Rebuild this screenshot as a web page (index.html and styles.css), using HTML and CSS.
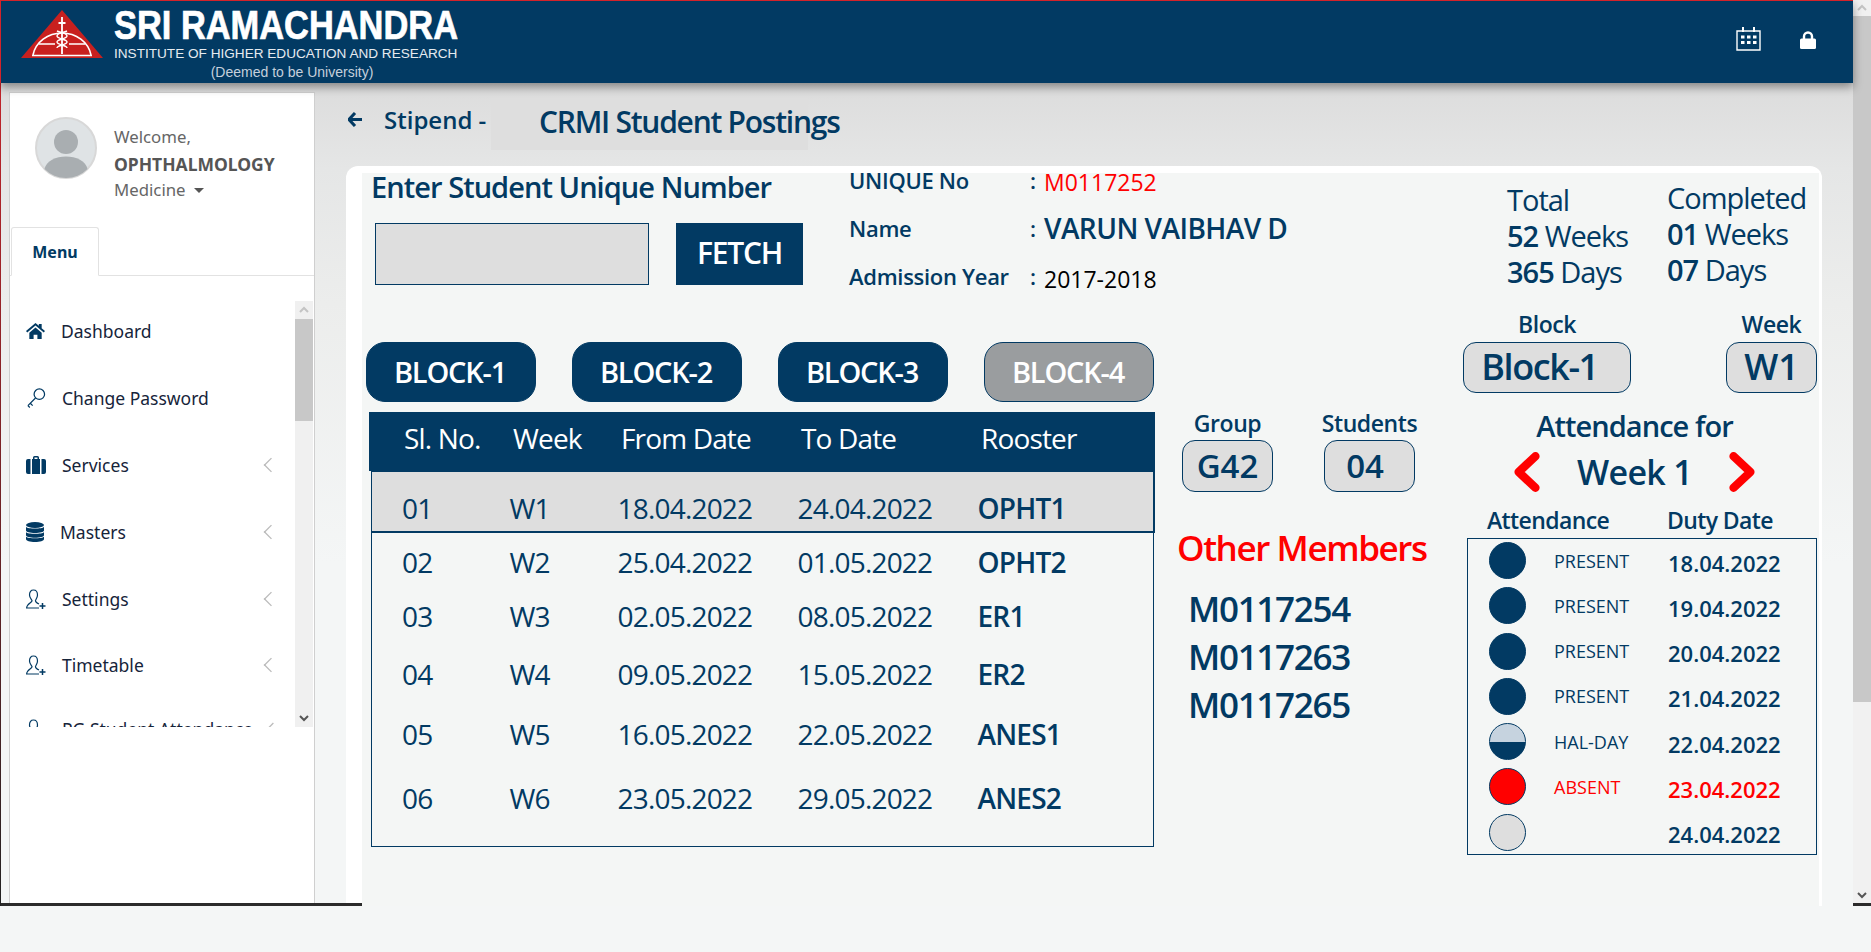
FILE: index.html
```html
<!DOCTYPE html>
<html lang="en">
<head>
  <meta charset="UTF-8" />
  <title>CRMI Student Postings</title>
  <link rel="stylesheet" href="styles.css">
</head>
<body>
  <div class="page">
    <header class="top-bar">
      <div class="brand">
        <svg class="brand-logo" viewBox="0 0 82 48">
          <path d="M41 0 82 48H0z" fill="#c8201f"/>
          <path d="M12 45A29.500 27 0 0 1 70 45" fill="none" stroke="#fff" stroke-width="1.600"/>
          <path d="M11 45.500H71M18 34H34M48 34H64" stroke="#fff" stroke-width="1.600"/>
          <path d="M41 7V44M37.500 13H44.500" stroke="#fff" stroke-width="1.800"/>
          <path d="M36 21C41 23 46 23 46 26S36 29 36 32 46 35 46 38M46 21C41 23 36 23 36 26S46 29 46 32 36 35 36 38" fill="none" stroke="#fff" stroke-width="1.400"/>
        </svg>
        <div class="brand-text">
          <div class="brand-name">SRI RAMACHANDRA</div>
          <div class="brand-sub">INSTITUTE OF HIGHER EDUCATION AND RESEARCH</div>
          <div class="brand-note">(Deemed to be University)</div>
        </div>
      </div>
      <div class="top-icons">
        <svg class="icon-calendar" viewBox="0 0 25 24">
          <path d="M1 4H24V23H1z" fill="none" stroke="#fff" stroke-width="1.400"/>
          <path d="M7 0V5M18 0V5" stroke="#fff" stroke-width="2"/>
          <path d="M5 8.500h3.500v3H5zM11 8.500h3.500v3H11zM17 8.500h3.500v3H17zM5 14h3.500v3H5zM11 14h3.500v3H11zM17 14h3.500v3H17z" fill="#fff"/>
        </svg>
        <svg class="icon-lock" viewBox="0 0 16 18">
          <path d="M4 8V5.500a4 4 0 0 1 8 0V8" fill="none" stroke="#fff" stroke-width="2.400"/>
          <rect y="7.500" width="16" height="10.500" rx="1.500" fill="#fff"/>
        </svg>
      </div>
    </header>

    <div class="shell">
      <aside class="side-col">
        <div class="sidebar">
          <div class="profile">
            <svg class="avatar" viewBox="0 0 62 62">
              <circle cx="31" cy="31" r="30" fill="#dfe3e5" stroke="#d8d8d8" stroke-width="2"/>
              <circle cx="31" cy="25" r="12" fill="#a9aeb1"/>
              <path d="M9.500 52C11 44 21 39.500 31 39.500S51 44 52.500 52A30 30 0 0 1 9.500 52z" fill="#a9aeb1"/>
            </svg>
            <div class="profile-text">
              <div>Welcome,</div>
              <div class="profile-name">OPHTHALMOLOGY</div>
              <div>Medicine <span class="caret"></span></div>
            </div>
          </div>

          <div class="tabs"><div class="tab">Menu</div></div>

          <div class="menu-wrap">
            <ul class="menu">
              <li>
                <svg class="mi mi-19" viewBox="0 0 20 17"><path d="M10 0 0 8.500 1.300 10 10 2.800 18.700 10 20 8.500 16.500 5.500V1h-3v2z M3.500 10.300V17H8v-4.500h4V17h4.500v-6.700L10 4.800z" fill="#023a63"/></svg>
                <span>Dashboard</span>
              </li>
              <li>
                <svg class="mi" viewBox="0 0 20 21"><g fill="none" stroke="#023a63" stroke-width="1.300"><circle cx="13.500" cy="6.500" r="5.500"/><path d="M9.500 10.500 1.500 18.500M4 16l2.500 2.500M1.500 18.500l2 2"/></g></svg>
                <span>Change Password</span>
              </li>
              <li>
                <svg class="mi" viewBox="0 0 20 18"><path d="M7 3V1.500A1.500 1.500 0 0 1 8.500 0h3A1.500 1.500 0 0 1 13 1.500V3h1v15H6V3zM8.500 3h3V1.500h-3zM4.500 3V18H2a2 2 0 0 1-2-2V5a2 2 0 0 1 2-2zM15.500 3H18a2 2 0 0 1 2 2V16a2 2 0 0 1-2 2h-2.500z" fill="#023a63"/></svg>
                <span>Services</span>
                <i class="chev"></i>
              </li>
              <li>
                <svg class="mi mi-18" viewBox="0 0 18 20"><g fill="#023a63"><ellipse cx="9" cy="3" rx="9" ry="3"/><path d="M0 5C2 7 16 7 18 5V8.500C18 10 14 11 9 11S0 10 0 8.500z"/><path d="M0 10.200C2 12.200 16 12.200 18 10.200V13.200C18 14.700 14 15.700 9 15.700S0 14.700 0 13.200z"/><path d="M0 14.800C2 16.800 16 16.800 18 14.800V17C18 18.800 14 20 9 20S0 18.800 0 17z"/></g></svg>
                <span>Masters</span>
                <i class="chev"></i>
              </li>
              <li>
                <svg class="mi" viewBox="0 0 20 20"><g fill="none" stroke="#023a63" stroke-width="1.200"><path d="M7.500 1C4.500 1 3.500 3.500 3.500 6S5 10 6 11.500C6.500 13.500 1 14 .6 19H13M7.500 1C10.500 1 11.500 3.500 11.500 6S10 10 9.500 11.500C9.300 13 11 14 13 15"/><path d="M16.500 14V20M13.500 17H19.500" stroke-width="1.500"/></g></svg>
                <span>Settings</span>
                <i class="chev"></i>
              </li>
              <li>
                <svg class="mi" viewBox="0 0 20 20"><g fill="none" stroke="#023a63" stroke-width="1.200"><path d="M7.500 1C4.500 1 3.500 3.500 3.500 6S5 10 6 11.500C6.500 13.500 1 14 .6 19H13M7.500 1C10.500 1 11.500 3.500 11.500 6S10 10 9.500 11.500C9.300 13 11 14 13 15"/><path d="M16.500 14V20M13.500 17H19.500" stroke-width="1.500"/></g></svg>
                <span>Timetable</span>
                <i class="chev"></i>
              </li>
              <li>
                <svg class="mi" viewBox="0 0 20 20"><g fill="none" stroke="#023a63" stroke-width="1.200"><path d="M7.500 1C4.500 1 3.500 3.500 3.500 6S5 10 6 11.500C6.500 13.500 1 14 .6 19H13M7.500 1C10.500 1 11.500 3.500 11.500 6S10 10 9.500 11.500C9.300 13 11 14 13 15"/></g></svg>
                <span>PG Student Attendance</span>
                <i class="chev"></i>
              </li>
            </ul>
            <div class="menu-scroll">
              <svg viewBox="0 0 18 18"><path d="M5 11 9 7l4 4" fill="none" stroke="#c4c4c4" stroke-width="2"/></svg>
              <div class="menu-thumb"></div>
              <svg class="menu-down" viewBox="0 0 18 18"><path d="M5 7l4 4 4-4" fill="none" stroke="#555" stroke-width="2"/></svg>
            </div>
          </div>
        </div>
      </aside>

      <main class="main">
        <div class="page-title">
          <svg class="back" viewBox="0 0 14 15"><path d="M7 1 1 7.500 7 14M1.500 7.500H14" fill="none" stroke="#023a63" stroke-width="3"/></svg>
          <span class="crumb">Stipend -</span>
          <div class="title-box"><span>CRMI Student Postings</span></div>
        </div>

        <section class="panel">
          <div class="panel-body">
            <div class="top-row">
              <div class="fetch-col">
                <h2>Enter Student Unique Number</h2>
                <div class="fetch-row">
                  <div class="fetch-input"></div>
                  <div class="fetch-btn">FETCH</div>
                </div>
              </div>
              <div class="info-col">
                <div class="info-row"><span>UNIQUE No</span><span>:</span><span class="val-red">M0117252</span></div>
                <div class="info-row"><span>Name</span><span>:</span><span class="val-name">VARUN VAIBHAV D</span></div>
                <div class="info-row"><span>Admission Year</span><span>:</span><span class="val-black">2017-2018</span></div>
              </div>
              <div class="count-col count-total">
                <div>Total</div>
                <div><b>52</b> Weeks</div>
                <div><b>365</b> Days</div>
              </div>
              <div class="count-col count-done">
                <div>Completed</div>
                <div><b>01</b> Weeks</div>
                <div><b>07</b> Days</div>
              </div>
            </div>

            <div class="lower-row">
              <div class="left-col">
                <div class="blocks">
                  <div class="block-btn">BLOCK-1</div>
                  <div class="block-btn">BLOCK-2</div>
                  <div class="block-btn">BLOCK-3</div>
                  <div class="block-btn off">BLOCK-4</div>
                </div>
                <div class="table-head">
                  <span>Sl. No.</span><span>Week</span><span>From Date</span><span>To Date</span><span>Rooster</span>
                </div>
                <table class="posting-table">
                  <colgroup><col class="c1"><col class="c2"><col class="c3"><col class="c4"><col></colgroup>
                  <tbody>
                    <tr class="current"><td>01</td><td>W1</td><td>18.04.2022</td><td>24.04.2022</td><td class="code">OPHT1</td></tr>
                    <tr><td>02</td><td>W2</td><td>25.04.2022</td><td>01.05.2022</td><td class="code">OPHT2</td></tr>
                    <tr><td>03</td><td>W3</td><td>02.05.2022</td><td>08.05.2022</td><td class="code">ER1</td></tr>
                    <tr><td>04</td><td>W4</td><td>09.05.2022</td><td>15.05.2022</td><td class="code">ER2</td></tr>
                    <tr><td>05</td><td>W5</td><td>16.05.2022</td><td>22.05.2022</td><td class="code">ANES1</td></tr>
                    <tr><td>06</td><td>W6</td><td>23.05.2022</td><td>29.05.2022</td><td class="code">ANES2</td></tr>
                  </tbody>
                </table>
              </div>

              <div class="mid-col">
                <div class="pill-row">
                  <div class="pill-field"><label>Group</label><div class="pill">G42</div></div>
                  <div class="pill-field"><label>Students</label><div class="pill count">04</div></div>
                </div>
                <h3>Other Members</h3>
                <div class="member-list">
                  <div>M0117254</div>
                  <div>M0117263</div>
                  <div>M0117265</div>
                </div>
              </div>

              <div class="right-col">
                <div class="pill-row right-pills">
                  <div class="pill-field"><label>Block</label><div class="pill wide">Block-1</div></div>
                  <div class="pill-field"><label>Week</label><div class="pill">W1</div></div>
                </div>
                <div class="att-title">Attendance for</div>
                <div class="week-nav">
                  <svg viewBox="0 0 27 40"><path d="M22 5 6 20l16 15" fill="none" stroke="#f00" stroke-width="8" stroke-linecap="round" stroke-linejoin="round"/></svg>
                  <span>Week 1</span>
                  <svg viewBox="0 0 27 40"><path d="M5 5l16 15L5 35" fill="none" stroke="#f00" stroke-width="8" stroke-linecap="round" stroke-linejoin="round"/></svg>
                </div>
                <div class="att-head"><span>Attendance</span><span>Duty Date</span></div>
                <div class="att-box">
                  <div class="att-row"><i class="dot"></i><span class="st">PRESENT</span><span class="dt">18.04.2022</span></div>
                  <div class="att-row"><i class="dot"></i><span class="st">PRESENT</span><span class="dt">19.04.2022</span></div>
                  <div class="att-row"><i class="dot"></i><span class="st">PRESENT</span><span class="dt">20.04.2022</span></div>
                  <div class="att-row"><i class="dot"></i><span class="st">PRESENT</span><span class="dt">21.04.2022</span></div>
                  <div class="att-row"><i class="dot half"></i><span class="st">HAL-DAY</span><span class="dt">22.04.2022</span></div>
                  <div class="att-row absent"><i class="dot"></i><span class="st">ABSENT</span><span class="dt">23.04.2022</span></div>
                  <div class="att-row"><i class="dot none"></i><span class="st"></span><span class="dt">24.04.2022</span></div>
                </div>
              </div>
            </div>
          </div>
        </section>
      </main>
    </div>
  </div>

  <div class="page-scroll">
    <svg viewBox="0 0 18 16"><path d="M5 10l4-4 4 4" fill="none" stroke="#c4c4c4" stroke-width="2"/></svg>
    <div class="page-thumb"></div>
    <svg class="page-down" viewBox="0 0 18 16"><path d="M5 6l4 4 4-4" fill="none" stroke="#555" stroke-width="2"/></svg>
  </div>
</body>
</html>
```

FILE: styles.css
```css
:root {
  --navy: #023a63;
  --grey-box: #dedede;
  --panel: #f4f6f5;
  --font: "Open Sans", "Noto Sans", sans-serif;
}

* {
  box-sizing: border-box;
}

html, body {
  height: 952px;
  overflow: hidden;
}

body {
  margin: 0;
  display: flex;
  background: #f4f6f6;
  color: var(--navy);
  font-family: var(--font);
}

.page {
  position: relative;
  flex: 1;
  display: flex;
  flex-direction: column;
  min-width: 0;
}

/* top bar */
.top-bar {
  position: relative;
  z-index: 2;
  height: 83px;
  display: flex;
  justify-content: space-between;
  background: var(--navy);
  border-top: 1px solid #d4232a;
  border-left: 1px solid #d4232a;
  box-shadow: 0 4px 9px rgba(0, 0, 0, 0.4);
}

.brand {
  display: flex;
  padding: 9px 0 0 20px;
}

.brand-logo {
  width: 82px;
  height: 48px;
}

.brand-text {
  margin-left: 11px;
  width: 346px;
  color: #fff;
  font-family: "Liberation Sans", Arial, sans-serif;
}

.brand-name {
  font-size: 40px;
  line-height: 30px;
  font-weight: 700;
  white-space: nowrap;
  -webkit-text-stroke: 0.7px #fff;
  transform: scaleX(0.86);
  transform-origin: left;
}

.brand-sub {
  margin-top: 7px;
  font-size: 13.600px;
  line-height: 14px;
  white-space: nowrap;
  color: #e6ebf0;
}

.brand-note {
  margin-top: 4px;
  padding-left: 10px;
  font-size: 14px;
  line-height: 15px;
  text-align: center;
  color: #c5d0dc;
}

.top-icons {
  display: flex;
  gap: 39px;
  padding: 26px 37px 0 0;
}

.icon-calendar {
  width: 25px;
  height: 24px;
}

.icon-lock {
  width: 16px;
  height: 18px;
  margin-top: 4px;
}

/* layout */
.shell {
  flex: 1;
  display: flex;
  background: linear-gradient(#dcdcdc 0, #e5e6e6 85px, #ecedec 220px, #f4f6f6 480px);
}

.side-col {
  position: relative;
  width: 315px;
  height: 823px;
  padding: 9px 0 3px 8px;
  border-left: 1px solid;
  border-image: linear-gradient(#c2232a, #222) 1;
}

.side-col::after {
  content: "";
  position: absolute;
  left: 0;
  bottom: 0;
  width: 361px;
  height: 3px;
  background: #2b2b2b;
  z-index: 1;
}

.sidebar {
  height: 100%;
  background: #fff;
  border: 1px solid #cfcfcf;
  border-bottom: 0;
  font-family: "Noto Sans", sans-serif;
}

.profile {
  height: 134px;
  display: flex;
  gap: 17px;
  padding: 24px 0 0 25px;
}

.avatar {
  width: 62px;
  height: 62px;
}

.profile-text {
  padding-top: 7px;
  font-size: 16.800px;
  line-height: 26.500px;
  color: #666;
}

.profile-name {
  font-size: 17.500px;
  font-weight: 700;
  color: #555;
}

.caret {
  display: inline-block;
  margin-left: 4px;
  vertical-align: 3px;
  border: 5px solid transparent;
  border-top: 5px solid #555;
  border-bottom: 0;
}

.tabs {
  height: 49px;
  padding-left: 1px;
  border-bottom: 1px solid #e2e2e2;
}

.tab {
  width: 88px;
  height: 49px;
  border: 1px solid #e2e2e2;
  border-bottom: 1px solid #fff;
  border-radius: 3px 3px 0 0;
  text-align: center;
  font-size: 16px;
  font-weight: 700;
  line-height: 48px;
}

.menu-wrap {
  display: flex;
  height: 451px;
  padding-top: 21px;
}

.menu {
  flex: 1;
  margin: 0;
  padding: 0 0 0 16px;
  list-style: none;
  overflow: hidden;
}

.menu li {
  display: flex;
  align-items: center;
  gap: 16px;
  height: 67px;
  font-size: 17.500px;
  white-space: nowrap;
  color: #16243a;
}

.menu li:nth-child(6) {
  margin-top: -1px;
}

.menu li:last-child {
  margin-top: -3px;
}

.mi {
  width: 20px;
  height: 20px;
  flex: none;
}

.mi-19 {
  width: 19px;
}

.mi-18 {
  width: 18px;
}

.chev {
  margin-left: auto;
  margin-right: 20px;
  width: 8px;
  height: 8px;
  border-left: 1px solid #bbb;
  border-bottom: 1px solid #bbb;
  transform: rotate(45deg) scale(1.300);
}

.menu-scroll {
  width: 18px;
  margin-top: 4px;
  margin-right: 1px;
  display: flex;
  flex-direction: column;
  background: #f0f0f0;
}

.menu-scroll svg,
.page-scroll svg {
  display: block;
  width: 18px;
  height: 18px;
  flex: none;
}

.menu-thumb {
  height: 102px;
  background: #c8c8c8;
}

.menu-down {
  margin-top: auto;
}

/* main area */
.main {
  flex: 1;
  min-width: 0;
  padding: 14px 0 0 31px;
}

.page-title {
  height: 69px;
  display: flex;
  align-items: flex-start;
}

.back {
  width: 14px;
  height: 15px;
  margin: 15px 0 0 2px;
}

.crumb {
  margin: 7px 0 0 22px;
  width: 107px;
  font-size: 24px;
  line-height: 32px;
  font-weight: 600;
  white-space: nowrap;
}

.title-box {
  width: 317px;
  height: 53px;
  padding: 7px 0 0 48px;
  background: var(--grey-box);
  font-size: 30px;
  line-height: 36px;
  font-weight: 600;
  letter-spacing: -1.250px;
  white-space: nowrap;
}

.panel {
  width: 1476px;
  height: 740px;
  padding: 7px 3px 0 16px;
  background: #fff;
  border-radius: 12px 12px 0 0;
}

.panel-body {
  height: 100%;
  background: var(--panel);
}

.top-row {
  height: 137px;
  display: flex;
}

.fetch-col {
  width: 487px;
  padding-left: 9px;
}

h2 {
  margin: 0;
  font-size: 29px;
  line-height: 28px;
  font-weight: 600;
  letter-spacing: -0.950px;
  white-space: nowrap;
}

.fetch-row {
  display: flex;
  gap: 27px;
  margin: 22px 0 0 4px;
}

.fetch-input {
  width: 274px;
  height: 62px;
  background: var(--grey-box);
  border: 1px solid var(--navy);
}

.fetch-btn {
  width: 127px;
  height: 62px;
  background: var(--navy);
  color: #fff;
  text-align: center;
  font-size: 30px;
  line-height: 60px;
  font-weight: 600;
  letter-spacing: -1.200px;
}

.info-col {
  width: 657px;
  display: flex;
  flex-direction: column;
  gap: 32px;
  margin-top: -1px;
  font-size: 22px;
  font-weight: 600;
  letter-spacing: -0.300px;
}

.info-row {
  display: grid;
  grid-template-columns: 181px 14px 1fr;
  height: 16px;
  line-height: 16px;
  white-space: nowrap;
}

.val-red {
  color: #f00;
  font-size: 23px;
  font-weight: 500;
  letter-spacing: 0;
  padding-top: 2px;
}

.val-name {
  font-size: 28px;
  letter-spacing: -0.550px;
}

.val-black {
  color: #000;
  font-size: 23px;
  font-weight: 500;
  letter-spacing: 0;
  padding-top: 3px;
}

.count-col {
  font-size: 29px;
  line-height: 36px;
  letter-spacing: -1px;
  white-space: nowrap;
}

.count-total {
  width: 161px;
  padding: 9px 0 0 1px;
}

.count-done {
  padding-top: 7px;
}

.count-col b {
  font-weight: 600;
}

.lower-row {
  display: flex;
}

.left-col {
  width: 798px;
  padding: 32px 0 0 4px;
}

.blocks {
  display: flex;
  gap: 36px;
}

.block-btn {
  width: 170px;
  height: 60px;
  padding-right: 2px;
  background: var(--navy);
  color: #fff;
  border: 1px solid var(--navy);
  border-radius: 19px;
  text-align: center;
  font-size: 29px;
  line-height: 58px;
  font-weight: 600;
  letter-spacing: -1.200px;
}

.block-btn.off {
  background: #9a9d9f;
}

.table-head {
  display: grid;
  width: 786px;
  height: 59px;
  margin: 10px 0 0 3px;
  padding: 0 0 0 35px;
  grid-template-columns: 109px 108px 180px 180px 1fr;
  background: var(--navy);
  color: #fff;
  font-size: 28px;
  line-height: 52px;
  letter-spacing: -0.850px;
}

.posting-table {
  width: 783px;
  margin-left: 5px;
  table-layout: fixed;
  border-collapse: collapse;
  font-size: 28px;
  letter-spacing: -0.800px;
  border: 1px solid var(--navy);
}

.c1 {
  width: 138px;
}

.c2 {
  width: 108px;
}

.c3,
.c4 {
  width: 180px;
}

.posting-table td {
  padding: 0 0 3px;
  line-height: 36px;
}

.posting-table td:first-child {
  padding-left: 30px;
}

.posting-table .code {
  font-weight: 600;
}

.posting-table tr.current {
  height: 60px;
  background: var(--grey-box);
  border-bottom: 1px solid var(--navy);
  outline: 1px solid var(--navy);
}

.posting-table tr.current td {
  padding-top: 16px;
}

.posting-table tr:nth-child(2) {
  height: 64px;
}

.posting-table tr:nth-child(3) {
  height: 44px;
}

.posting-table tr:nth-child(4) {
  height: 72px;
}

.posting-table tr:nth-child(5) {
  height: 48px;
}

.posting-table tr:nth-child(6) {
  height: 87px;
}

.posting-table tr:nth-child(6) td {
  padding-bottom: 10px;
}

.mid-col {
  width: 290px;
  padding-top: 99px;
}

.pill-row {
  display: flex;
  gap: 51px;
  margin-left: 22px;
}

.pill-field {
  display: flex;
  flex-direction: column;
  align-items: center;
  width: 91px;
}

.pill-field label {
  font-size: 23px;
  line-height: 28px;
  font-weight: 600;
  letter-spacing: -0.400px;
  white-space: nowrap;
}

.pill {
  width: 91px;
  height: 52px;
  margin-top: 3px;
  background: var(--grey-box);
  border: 1px solid var(--navy);
  border-radius: 13px;
  text-align: center;
  font-size: 33px;
  line-height: 50px;
  font-weight: 600;
}

.pill.count {
  padding-right: 9px;
}

h3 {
  margin: 34px 0 0 17px;
  color: #f00;
  font-size: 35px;
  line-height: 44px;
  font-weight: 600;
  letter-spacing: -1.400px;
  white-space: nowrap;
}

.member-list {
  margin: 15px 0 0 28px;
  font-size: 35px;
  line-height: 48px;
  font-weight: 600;
  letter-spacing: -1.300px;
}

.right-col {
  width: 369px;
}

.right-pills {
  gap: 95px;
  margin-left: 13px;
}

.right-pills .pill {
  margin-top: 4px;
  height: 51px;
  line-height: 47px;
  font-size: 36px;
}

.pill.wide {
  width: 168px;
  flex: none;
  padding-right: 15px;
  letter-spacing: -1.400px;
}

.right-pills .pill-field:first-child {
  width: 168px;
  margin-right: 0;
}

.att-title {
  margin-top: 17px;
  text-align: center;
  font-size: 29px;
  line-height: 32px;
  font-weight: 600;
  letter-spacing: -0.950px;
}

.week-nav {
  display: flex;
  justify-content: center;
  align-items: center;
  gap: 36px;
  height: 40px;
  margin-top: 10px;
  font-size: 34px;
  font-weight: 600;
  letter-spacing: -0.700px;
  white-space: nowrap;
}

.week-nav svg {
  width: 29px;
  height: 42px;
}

.att-head {
  display: grid;
  grid-template-columns: 180px 1fr;
  margin-top: 13px;
  padding-left: 37px;
  font-size: 23px;
  line-height: 30px;
  font-weight: 600;
  letter-spacing: -0.600px;
}

.att-box {
  display: flex;
  flex-direction: column;
  gap: 8.300px;
  width: 350px;
  height: 317px;
  margin: 3px 0 0 17px;
  padding: 3px 0 0 21px;
  border: 1px solid var(--navy);
}

.att-row {
  display: grid;
  grid-template-columns: 65px 114px 1fr;
  align-items: center;
  height: 37px;
}

.dot {
  display: block;
  width: 37px;
  height: 37px;
  border-radius: 50%;
  background: var(--navy);
  border: 1px solid var(--navy);
}

.dot.half {
  background: linear-gradient(#c6d3df 50%, var(--navy) 50%);
}

.dot.none {
  background: var(--grey-box);
}

.st {
  font-size: 18px;
}

.dt {
  font-size: 22px;
  font-weight: 600;
  padding-top: 4px;
}

.absent .st,
.absent .dt {
  color: #f00;
}

.absent .dot {
  background: #f00;
}

/* page scrollbar */
.page-scroll {
  width: 18px;
  height: 906px;
  flex: none;
  display: flex;
  flex-direction: column;
  background: #f1f1f1;
  border-bottom: 3px solid #2b2b2b;
}

.page-scroll svg {
  height: 16px;
}

.page-thumb {
  height: 686px;
  background: #c8c8c8;
}

.page-down {
  margin-top: auto;
}
```
